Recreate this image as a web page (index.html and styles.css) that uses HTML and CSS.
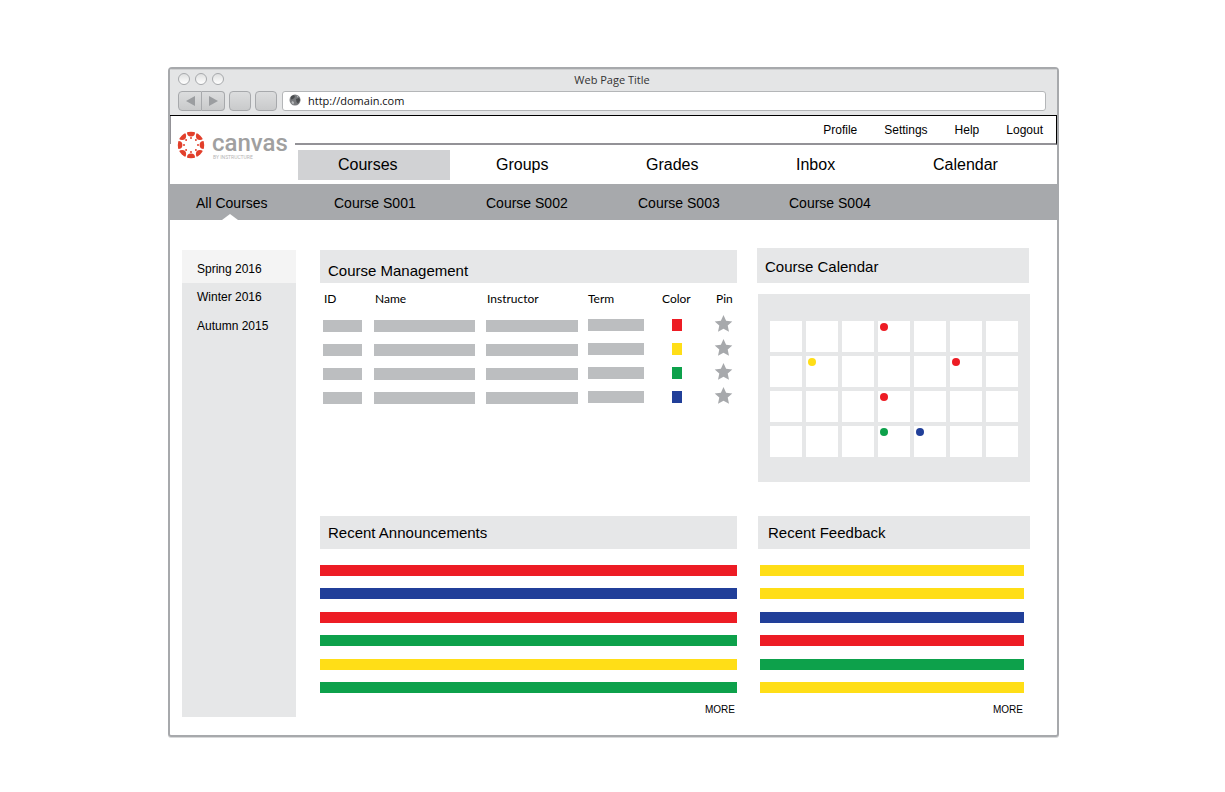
FILE: index.html
```html
<!DOCTYPE html>
<html lang="en">
<head>
<meta charset="utf-8">
<title>Web Page Title</title>
<link rel="stylesheet" href="styles.css">
</head>
<body>
<div class="window">
  <div class="chrome">
    <div class="titlebar">
      <div class="lights"><span class="light"></span><span class="light"></span><span class="light"></span></div>
      <span class="title">Web Page Title</span>
    </div>
    <div class="toolbar">
      <div class="history">
        <button class="history-btn" aria-label="Back"><svg width="9" height="10" viewBox="0 0 9 10"><path d="M9 0v10L0 5z" fill="#9b9da0"/></svg></button>
        <button class="history-btn" aria-label="Forward"><svg width="9" height="10" viewBox="0 0 9 10"><path d="M0 0v10l9-5z" fill="#9b9da0"/></svg></button>
      </div>
      <button class="tool-btn" aria-label="Reload"></button>
      <button class="tool-btn" aria-label="Home"></button>
      <label class="address">
        <svg width="12" height="12" viewBox="0 0 12 12"><circle cx="6" cy="6" r="5.5" fill="#77797c"/><path d="M2 2.500 5 1l1 2-2 2-2 .5zM7 5l3-1 1.300 2L9 9.500 7.500 8z" fill="#4a4c4f"/><path d="M3 7l2 1-.5 2.500L2.500 9zM7.500 1.500l2 1-1 1z" fill="#b9bbbd"/></svg>
        <input class="address-input" type="text" value="http://domain.com" aria-label="Address">
      </label>
    </div>
  </div>

  <header class="header">
    <a class="logo" href="#">
      <svg class="logo-mark" width="28" height="28" viewBox="-14 -14 28 28">
        <clipPath id="ring"><circle r="13.200"/></clipPath>
        <g fill="#e23f2b" clip-path="url(#ring)">
          <circle cx="0" cy="-12.600" r="4"/><circle cx="0" cy="12.600" r="4"/><circle cx="-12.600" cy="0" r="4"/><circle cx="12.600" cy="0" r="4"/>
          <circle cx="8.900" cy="-8.900" r="4"/><circle cx="8.900" cy="8.900" r="4"/><circle cx="-8.900" cy="-8.900" r="4"/><circle cx="-8.900" cy="8.900" r="4"/>
          <circle cx="0" cy="-7" r="1"/><circle cx="0" cy="7" r="1"/><circle cx="-7" cy="0" r="1"/><circle cx="7" cy="0" r="1"/>
          <circle cx="4.900" cy="-4.900" r="1"/><circle cx="4.900" cy="4.900" r="1"/><circle cx="-4.900" cy="-4.900" r="1"/><circle cx="-4.900" cy="4.900" r="1"/>
        </g>
      </svg>
      <span class="logo-text"><span class="logo-name">canvas</span><span class="logo-by">BY INSTRUCTURE</span></span>
    </a>
    <div class="header-navs">
      <nav class="util-nav"><a href="#">Profile</a><a href="#">Settings</a><a href="#">Help</a><a href="#">Logout</a></nav>
      <nav class="main-nav"><a class="active" href="#">Courses</a><a href="#">Groups</a><a href="#">Grades</a><a href="#">Inbox</a><a href="#">Calendar</a></nav>
    </div>
  </header>

  <nav class="sub-nav">
    <a href="#"><span class="current">All Courses</span></a><a href="#">Course S001</a><a href="#">Course S002</a><a href="#">Course S003</a><a href="#">Course S004</a>
  </nav>

  <main class="content">
    <nav class="sidebar"><a class="active" href="#">Spring 2016</a><a href="#">Winter 2016</a><a href="#">Autumn 2015</a></nav>

    <section class="courses">
      <h2 class="heading heading-low">Course Management</h2>
      <table class="table">
        <colgroup><col class="c-id"><col><col class="c-instructor"><col class="c-term"><col class="c-color"><col class="c-pin"></colgroup>
        <thead><tr><th>ID</th><th>Name</th><th>Instructor</th><th>Term</th><th>Color</th><th>Pin</th></tr></thead>
        <tbody>
          <tr><td><span class="ph"></span></td><td><span class="ph"></span></td><td><span class="ph"></span></td><td><span class="ph"></span></td><td><span class="swatch red"></span></td><td><button class="pin" aria-label="Pin"><svg width="18" height="18" viewBox="0 0 18 18"><path d="M8.500 0l2.600 5.700 6.200.7-4.600 4.200 1.300 6.200-5.500-3.100L3 16.800l1.300-6.200L-.3 6.400l6.200-.7z"/></svg></button></td></tr>
          <tr><td><span class="ph"></span></td><td><span class="ph"></span></td><td><span class="ph"></span></td><td><span class="ph"></span></td><td><span class="swatch yellow"></span></td><td><button class="pin" aria-label="Pin"><svg width="18" height="18" viewBox="0 0 18 18"><path d="M8.500 0l2.600 5.700 6.200.7-4.600 4.200 1.300 6.200-5.500-3.100L3 16.800l1.300-6.200L-.3 6.400l6.200-.7z"/></svg></button></td></tr>
          <tr><td><span class="ph"></span></td><td><span class="ph"></span></td><td><span class="ph"></span></td><td><span class="ph"></span></td><td><span class="swatch green"></span></td><td><button class="pin" aria-label="Pin"><svg width="18" height="18" viewBox="0 0 18 18"><path d="M8.500 0l2.600 5.700 6.200.7-4.600 4.200 1.300 6.200-5.500-3.100L3 16.800l1.300-6.200L-.3 6.400l6.200-.7z"/></svg></button></td></tr>
          <tr><td><span class="ph"></span></td><td><span class="ph"></span></td><td><span class="ph"></span></td><td><span class="ph"></span></td><td><span class="swatch blue"></span></td><td><button class="pin" aria-label="Pin"><svg width="18" height="18" viewBox="0 0 18 18"><path d="M8.500 0l2.600 5.700 6.200.7-4.600 4.200 1.300 6.200-5.500-3.100L3 16.800l1.300-6.200L-.3 6.400l6.200-.7z"/></svg></button></td></tr>
        </tbody>
      </table>
    </section>

    <section class="calendar">
      <h2 class="heading heading-tall">Course Calendar</h2>
      <div class="month">
        <div class="day"></div><div class="day"></div><div class="day"></div><div class="day"><span class="dot red"></span></div><div class="day"></div><div class="day"></div><div class="day"></div>
        <div class="day"></div><div class="day"><span class="dot yellow"></span></div><div class="day"></div><div class="day"></div><div class="day"></div><div class="day"><span class="dot red"></span></div><div class="day"></div>
        <div class="day"></div><div class="day"></div><div class="day"></div><div class="day"><span class="dot red"></span></div><div class="day"></div><div class="day"></div><div class="day"></div>
        <div class="day"></div><div class="day"></div><div class="day"></div><div class="day"><span class="dot green"></span></div><div class="day"><span class="dot blue"></span></div><div class="day"></div><div class="day"></div>
      </div>
    </section>

    <section class="announcements">
      <h2 class="heading">Recent Announcements</h2>
      <ul class="bars"><li class="red"></li><li class="blue"></li><li class="red"></li><li class="green"></li><li class="yellow"></li><li class="green"></li></ul>
      <a class="more" href="#">MORE</a>
    </section>

    <section class="feedback">
      <h2 class="heading">Recent Feedback</h2>
      <ul class="bars"><li class="yellow"></li><li class="yellow"></li><li class="blue"></li><li class="red"></li><li class="green"></li><li class="yellow"></li></ul>
      <a class="more" href="#">MORE</a>
    </section>
  </main>
</div>
</body>
</html>
```
FILE: styles.css
```css
* { box-sizing: border-box; }

body {
  margin: 0;
  padding: 67px 166px 54px 168px;
  background: #fff;
  color: #000;
  font-family: "Liberation Sans", Arial, sans-serif;
  font-size: 12px;
}

a { color: inherit; text-decoration: none; }
button { margin: 0; padding: 0; border: 0; background: none; cursor: pointer; }

.window {
  border: 2px solid #a7a9ac;
  border-radius: 4px 4px 3px 3px;
  box-shadow: 0 1px 0 #d8d9da;
  overflow: hidden;
}

/* Browser chrome */
.chrome {
  padding: 0 11px 4px 8px;
  background: #e4e5e6;
  box-shadow: inset 0 1px 0 #cfd0d1;
  border-bottom: 1px solid #000;
  font-family: "Open Sans", sans-serif;
  font-size: 11px;
}
.titlebar {
  display: grid;
  grid-template-columns: 1fr auto 1fr;
  align-items: center;
  height: 22px;
  padding-bottom: 2px;
}
.lights { display: flex; gap: 5px; }
.light {
  width: 12px;
  height: 12px;
  border: 1px solid #a7a9ac;
  border-radius: 50%;
  background: linear-gradient(#dfe0e0, #fff);
}
.title { color: #333; font-weight: 500; }
.toolbar { display: flex; gap: 4px; height: 20px; }
.history { display: flex; width: 47px; }
.history-btn, .tool-btn {
  border: 1px solid #a7a9ac;
  background: linear-gradient(#dcddde, #c9cacb);
}
.history-btn {
  flex: 1;
  display: flex;
  align-items: center;
  justify-content: center;
}
.history-btn:first-child { border-radius: 4px 0 0 4px; }
.history-btn:last-child { border-left: 0; border-radius: 0 4px 4px 0; }
.tool-btn { width: 22px; border-radius: 4px; }
.address {
  flex: 1;
  display: flex;
  align-items: center;
  gap: 7px;
  margin-left: 1px;
  padding: 0 6px 2px;
  border: 1px solid #b4b6b8;
  border-radius: 3px;
  background: #fff;
}
.address-input {
  flex: 1;
  padding: 0;
  border: 0;
  outline: 0;
  background: none;
  color: #111;
  font: inherit;
  font-weight: 500;
}

/* Site header */
.header { display: flex; }
.logo {
  display: flex;
  gap: 7px;
  width: 125px;
  padding: 15px 0 0 7px;
  background: linear-gradient(#939297, #939297) no-repeat 0 0 / 1px 28px;
}
.logo-text { display: flex; flex-direction: column; font-family: Roboto, sans-serif; }
.logo-name { color: #a0a0a0; font-size: 24px; line-height: 24px; font-weight: 500; }
.logo-by { padding-left: 1px; color: #b5b5b5; font-size: 5px; line-height: 5px; }
.header-navs { flex: 1; }
.util-nav {
  display: flex;
  justify-content: flex-end;
  gap: 27px;
  padding: 2px 13px 0 0;
  border-right: 1px solid #000;
  border-bottom: 2px solid #939297;
  line-height: 25px;
}
.main-nav {
  display: grid;
  grid-template-columns: 158fr 150fr 150fr 137fr 164fr;
  padding: 5px 0 4px 3px;
  font-size: 16px;
  line-height: 30px;
}
.main-nav a { margin-right: 6px; padding-left: 40px; }
.main-nav .active { background: #d1d2d4; }

.sub-nav {
  display: grid;
  grid-template-columns: 138fr 152fr 152fr 151fr 268fr;
  padding: 2px 0 0 26px;
  background: #a7a9ac;
  font-size: 14px;
  line-height: 34px;
}
.current { position: relative; display: inline-block; }
.current::after {
  content: "";
  position: absolute;
  bottom: 0;
  left: 50%;
  margin-left: -10px;
  border: 8px solid transparent;
  border-top: 0;
  border-bottom: 6px solid #fff;
}

/* Dashboard */
.content {
  display: grid;
  grid-template-columns: 118px 417fr 273fr;
  gap: 34px 20px;
  padding: 28px 27px 18px 12px;
}
.sidebar {
  grid-row: 1 / 3;
  margin: 2px 4px 0 0;
  background: #e6e7e8;
  line-height: 29px;
}
.sidebar a { display: block; padding-left: 15px; }
.sidebar .active { padding-top: 6px; line-height: 27px; background: #f4f4f4; }

.heading {
  margin: 0;
  padding-left: 8px;
  background: #e6e7e8;
  font-size: 15px;
  font-weight: 400;
  line-height: 33px;
}
.heading-low { padding-top: 8px; line-height: 25px; }
.heading-tall { margin-right: 1px; padding-top: 2px; }

.courses { margin-top: 2px; }
.table { width: 100%; border-collapse: collapse; table-layout: fixed; }
.c-id { width: 54px; }
.c-instructor { width: 102px; }
.c-term { width: 74px; }
.c-color { width: 53px; }
.c-pin { width: 22px; }
.table th {
  height: 31px;
  padding: 0 0 0 1px;
  font-family: Lato, sans-serif;
  font-weight: 400;
  text-align: left;
}
.table td { height: 24px; padding: 0; }
.table th:first-child { padding-left: 4px; }
.table td:first-child { padding: 0 12px 0 3px; }
.table td:nth-child(2) { padding-right: 11px; }
.table td:nth-child(3) { padding-right: 10px; }
.table td:nth-child(4) { padding: 0 18px 2px 0; }
.table th:nth-child(4), .table th:nth-child(5) { padding-left: 0; }
.table td:nth-child(5) { padding: 0 0 2px 10px; }
.table td:nth-child(6) { padding-bottom: 4px; }
.ph { display: block; height: 12px; background: #bcbec0; }
.swatch { display: block; width: 10px; height: 12px; }
.pin { display: block; height: 18px; }
.pin svg { display: block; overflow: visible; fill: #a7a9ac; }

.month {
  display: grid;
  grid-template-columns: repeat(7, 1fr);
  grid-auto-rows: 31px;
  gap: 4px;
  margin: 11px 0 0 1px;
  padding: 27px 12px 25px;
  background: #e6e7e8;
}
.day { padding: 2px; background: #fff; }
.dot { display: block; width: 8px; height: 8px; border-radius: 50%; }

.announcements, .feedback { display: flex; flex-direction: column; }
.bars {
  display: flex;
  flex-direction: column;
  justify-content: space-between;
  min-height: 128px;
  margin: 16px 0 10px;
  padding: 0;
  list-style: none;
}
.bars li { height: 11px; }
.more { align-self: flex-end; padding-right: 2px; font-size: 10px; line-height: 14px; }

.feedback { margin-left: 1px; }
.feedback .heading { padding-left: 10px; }
.feedback .bars { margin-left: 2px; margin-right: 6px; }
.feedback .more { padding-right: 7px; }

.red { background: #ed1c24; }
.yellow { background: #ffde17; }
.green { background: #0da14b; }
.blue { background: #213f99; }
```
